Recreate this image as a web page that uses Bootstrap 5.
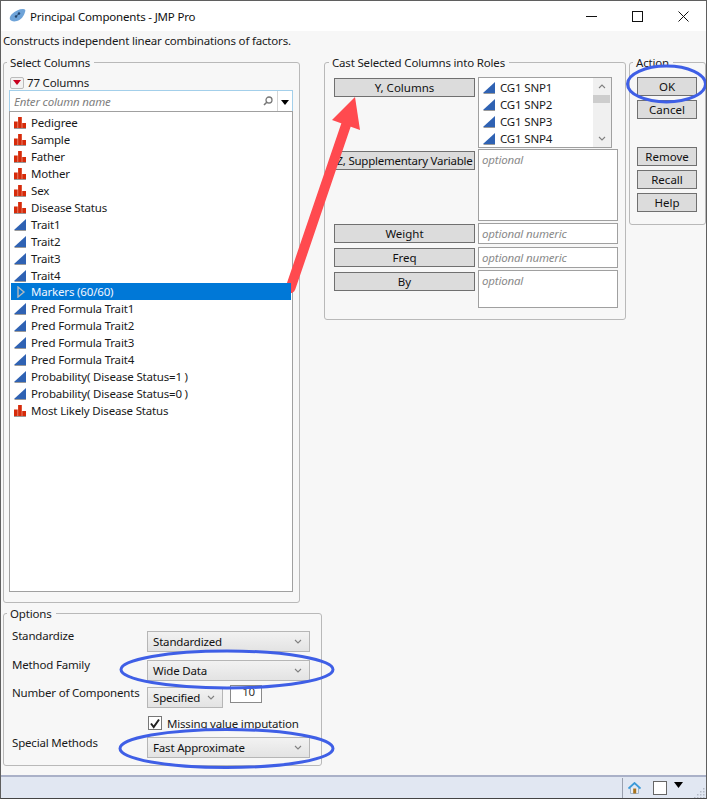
<!DOCTYPE html>
<html lang="en">
<head>
<meta charset="utf-8">
<title>Principal Components - JMP Pro</title>
<link rel="stylesheet" href="https://cdn.jsdelivr.net/npm/bootstrap@5.3.0/dist/css/bootstrap.min.css">
<style>
html,body{margin:0;padding:0;background:#fff}
body{font-family:"Noto Sans","Open Sans",sans-serif;font-size:11.5px;line-height:17px;color:#1a1a1a;letter-spacing:-.18px}
.win{position:relative;width:707px;height:799px;border:1px solid #5f5f5f;border-bottom-color:#444;background:#f7f7f7;overflow:hidden;display:flex;flex-direction:column}
.titlebar{height:30px;flex:none;background:#fff;color:#111;padding-left:8px;gap:4px}
.wctl{margin-left:auto;gap:0}
.wctl span{display:flex;width:46px;height:30px;align-items:center;justify-content:center}
.desc{height:17px;margin:1px 0 5px 2px;flex:none;white-space:nowrap}
.cols{flex:1;min-height:0;position:relative}
fieldset.grp{border:1px solid #b9b9b9;border-radius:3px;min-width:0;margin:0;position:relative}
fieldset.grp>legend{float:none;width:auto;font-size:inherit;line-height:17px;padding:0 4px 0 3px;margin:0}
.leftcol{width:319px;margin-left:2px;flex:none}
fieldset.selgrp{width:297px;height:549px;padding:0 6px 0 5px}
fieldset.selgrp>legend{margin-left:-2px}
.cnt{height:17px;margin-top:3px;gap:3px;padding-left:1px;margin-bottom:-1px}
.redbtn{width:14px;height:12px;border:1px solid #bbb;border-radius:2px;background:#f2f2f2;display:flex;align-items:center;justify-content:center}
.redbtn i{display:block;border:4px solid transparent;border-top:5px solid #c8001e;border-bottom:0}
.searchbox{height:22px;border:1px solid #a3cfea;background:#fff;color:#808080;font-style:italic;padding:0 0 0 4px;margin-bottom:0}
.searchbox .drop{margin-left:auto;gap:0}
.searchbox .drop svg{margin-right:4px}
.searchbox .dd{width:15px;height:20px;border-left:1px solid #d5d5d5;display:flex;align-items:center;justify-content:center}
.searchbox .dd i{display:block;border:4px solid transparent;border-top:5px solid #000;border-bottom:0;margin-top:2px}
.collist{height:481px;border:1px solid #a0a0a0;background:#fff;border-radius:0;padding:2px 1px 0;display:block;margin-top:-1px}
.collist .list-group-item{border:0;border-radius:0;background:transparent;color:#1a1a1a;padding:0 0 0 3px;height:17px;line-height:17px;display:flex;align-items:center;gap:5px;white-space:nowrap}
.collist .list-group-item.active{background:#0078d7;color:#f0f6ff}
.ico{width:12px;height:12px;flex:none}
fieldset.optgrp{width:319px;height:161px;margin-top:2px;padding:0 8px}
fieldset.optgrp>legend{margin-left:-5px}
.optgrid{display:grid;grid-template-columns:135px 163px;row-gap:0;margin-top:6px}
.optgrid>.l{white-space:nowrap;line-height:15px}
.fake-select{height:21px;border:1px solid #b6b6b6;background:linear-gradient(#f2f2f2,#e3e3e3);padding:0 0 0 5px;display:flex;align-items:center;white-space:nowrap;color:#111;border-radius:0}
.fake-select svg{margin-left:auto;margin-right:7px;flex:none}
.num{width:32px;height:18px;border:1px solid #8a8a8a;background:#fff;text-align:right;padding-right:6px;line-height:12px;overflow:hidden;margin-top:-2px;color:#333}
.chk{width:14px;height:14px;border:1px solid #777;background:#fff;display:flex;align-items:center;justify-content:center;margin-left:1px;margin-right:5px}
fieldset.castgrp{width:302px;height:266px;margin-left:2px;padding:0 0 0 9px}
fieldset.castgrp>legend{margin-left:-5px}
.rolerow{display:flex;gap:3px}
.rolebtn,.actbtn{background:#dcdcdc;border:1px solid #707070;border-radius:0;color:#111;font-size:inherit;line-height:17px;padding:0;height:19px;white-space:nowrap;overflow:hidden;--bs-btn-hover-bg:#dcdcdc;--bs-btn-hover-color:#111;--bs-btn-hover-border-color:#707070}
.rolebtn{width:141px;flex:none;display:flex;justify-content:center}
.actbtn{width:60px;display:block}
.rolebox{border:1px solid #a0a0a0;background:#fff;color:#8a8a8a;font-style:italic;padding:0 3px;width:140px;flex:none;line-height:19px;white-space:nowrap}
.ylist{width:134px;height:71px;padding:1px 0 0 4px;color:#1a1a1a;font-style:normal;line-height:17px;position:relative;overflow:hidden;margin-top:-1px}
.ylist>div{display:flex;align-items:center;gap:5px;height:17px}
.sb{position:absolute;right:0;top:0;bottom:0;width:18px;background:#f0f0f0}
.sb b{position:absolute;left:0;right:1px;top:17px;height:8px;background:#cdcdcd}
.sb svg{position:absolute;left:5px}
fieldset.actgrp{width:77px;height:171px;margin-left:3px;padding:0 7px}
fieldset.actgrp>legend{margin-left:-4px}
.status{height:23px;flex:none;background:#e1e7f2;border-top:2px solid #aab1c8;position:relative;justify-content:flex-end}
.stbox{width:14px;height:14px;border:1px solid #666;background:#fff}
.overlay{position:absolute;left:-1px;top:-1px;width:708px;height:799px;pointer-events:none}
.opt-t1{margin-top:3px}
.opt-m{margin-top:5px}
.opt-t{margin-top:8px}
.opt-m3{margin-top:4px}
.opt-t3{margin-top:6px;gap:7px}
.opt-sp{width:76px}
.opt-c{margin-top:8px;height:14px}
.opt-s{margin-top:5px}
.opt-u{margin-top:7px}
.rr1{margin-top:7px;align-items:flex-start}
.rr2{margin-top:1px}
.rr2 .rolebtn{margin-top:2px;letter-spacing:-.24px}
.rb2{height:72px}
.rr3{margin-top:2px}
.rr3b{margin-top:3px}
.rr3 .rolebtn{margin-top:1px}
.rb3{height:21px}
.rb4{height:38px}
.rr4 .rolebtn{margin-top:2px}
.rr4{margin-top:2px}
.act1{margin-top:6px;gap:4px}
.act2{margin-top:28px;gap:4px}
.stdiv{margin-right:5px}
.sthome{margin-right:12px}
.sttri{margin-left:7px;margin-right:11px;margin-top:-6px}
.stgrip{margin-right:1px;margin-top:9px}
</style>
</head>
<body>
<svg width="0" height="0" style="position:absolute">
<symbol id="nom" viewBox="0 0 12 12"><rect x="0" y="4.500" width="3.700" height="6.500" fill="#d62b0a"/><rect x="4.100" y="0" width="3.700" height="11" fill="#d62b0a"/><rect x="8.200" y="6" width="3.800" height="5" fill="#d62b0a"/><rect x="0" y="11" width="12" height="1" fill="#999"/></symbol>
<symbol id="con" viewBox="0 0 12 12"><polygon points="0,11 12,0 12,11" fill="#2f62b3"/><polygon points="0,12 12,12 12,11 1,11" fill="#9a9a9a"/></symbol>
<symbol id="chev" viewBox="0 0 8 5"><path d="M1 1 4 4 7 1" fill="none" stroke="#808080" stroke-width="1.100"/></symbol>
</svg>
<div class="win">
  <div class="titlebar d-flex align-items-center">
    <svg width="17" height="14" viewBox="0 0 17 14"><path d="M3 12C0 11 0 8 3 5 6 2 10 0 14 0c2 0 3 1 2 3-1 4-4 8-8 9-2 .5-4 .5-5 0z" fill="#6ea3d8"/><circle cx="7" cy="7.500" r="1.200" fill="#24466e"/><circle cx="10" cy="4.500" r="1.200" fill="#24466e"/><path d="M7 7.500 10 4.500" stroke="#24466e"/></svg>
    <span>Principal Components - JMP Pro</span>
    <div class="wctl d-flex">
      <span><svg width="11" height="11" viewBox="0 0 11 11"><path d="M0 5.500H11" stroke="#111"/></svg></span>
      <span><svg width="11" height="11" viewBox="0 0 11 11"><rect x=".5" y=".5" width="10" height="10" fill="none" stroke="#111"/></svg></span>
      <span><svg width="11" height="11" viewBox="0 0 11 11"><path d="M.5.5 10.500 10.500M10.500.5.5 10.500" stroke="#111"/></svg></span>
    </div>
  </div>
  <div class="desc">Constructs independent linear combinations of factors.</div>
  <div class="cols d-flex">
    <div class="leftcol">
      <fieldset class="grp selgrp">
        <legend>Select Columns</legend>
        <div class="cnt d-flex align-items-center"><span class="redbtn"><i></i></span><span>77 Columns</span></div>
        <div class="searchbox d-flex align-items-center"><span>Enter column name</span>
          <span class="drop d-flex align-items-center"><svg width="10" height="10" viewBox="0 0 10 10"><circle cx="6" cy="4" r="3" fill="none" stroke="#777" stroke-width="1.300"/><path d="M4 6 1 9" stroke="#777" stroke-width="1.600"/></svg><span class="dd"><i></i></span></span>
        </div>
        <div class="list-group collist">
          <div class="list-group-item"><svg class="ico"><use href="#nom"/></svg>Pedigree</div>
          <div class="list-group-item"><svg class="ico"><use href="#nom"/></svg>Sample</div>
          <div class="list-group-item"><svg class="ico"><use href="#nom"/></svg>Father</div>
          <div class="list-group-item"><svg class="ico"><use href="#nom"/></svg>Mother</div>
          <div class="list-group-item"><svg class="ico"><use href="#nom"/></svg>Sex</div>
          <div class="list-group-item"><svg class="ico"><use href="#nom"/></svg>Disease Status</div>
          <div class="list-group-item"><svg class="ico"><use href="#con"/></svg>Trait1</div>
          <div class="list-group-item"><svg class="ico"><use href="#con"/></svg>Trait2</div>
          <div class="list-group-item"><svg class="ico"><use href="#con"/></svg>Trait3</div>
          <div class="list-group-item"><svg class="ico"><use href="#con"/></svg>Trait4</div>
          <div class="list-group-item active"><svg class="ico" viewBox="0 0 12 12"><path d="M4 1 10 6 4 11Z" fill="none" stroke="#b0b8c0" stroke-width="1.400"/></svg>Markers (60/60)</div>
          <div class="list-group-item"><svg class="ico"><use href="#con"/></svg>Pred Formula Trait1</div>
          <div class="list-group-item"><svg class="ico"><use href="#con"/></svg>Pred Formula Trait2</div>
          <div class="list-group-item"><svg class="ico"><use href="#con"/></svg>Pred Formula Trait3</div>
          <div class="list-group-item"><svg class="ico"><use href="#con"/></svg>Pred Formula Trait4</div>
          <div class="list-group-item"><svg class="ico"><use href="#con"/></svg>Probability( Disease Status=1 )</div>
          <div class="list-group-item"><svg class="ico"><use href="#con"/></svg>Probability( Disease Status=0 )</div>
          <div class="list-group-item"><svg class="ico"><use href="#nom"/></svg>Most Likely Disease Status</div>
        </div>
      </fieldset>
      <fieldset class="grp optgrp">
        <legend>Options</legend>
        <div class="optgrid">
          <div class="l">Standardize</div>
          <div class="fake-select opt-t1">Standardized<svg width="8" height="5"><use href="#chev"/></svg></div>
          <div class="l opt-m">Method Family</div>
          <div class="fake-select opt-t">Wide Data<svg width="8" height="5"><use href="#chev"/></svg></div>
          <div class="l opt-m3">Number of Components</div>
          <div class="d-flex opt-t3"><div class="fake-select opt-sp">Specified<svg width="8" height="5"><use href="#chev"/></svg></div><div class="num">10</div></div>
          <div></div>
          <div class="d-flex align-items-center opt-c"><span class="chk"><svg width="12" height="11" viewBox="0 0 12 11"><path d="M2 5.500 4.700 9 10 1.500" fill="none" stroke="#222" stroke-width="2"/></svg></span><span>Missing value imputation</span></div>
          <div class="l opt-s">Special Methods</div>
          <div class="fake-select opt-u">Fast Approximate<svg width="8" height="5"><use href="#chev"/></svg></div>
        </div>
      </fieldset>
    </div>
    <fieldset class="grp castgrp">
      <legend>Cast Selected Columns into Roles</legend>
      <div class="rolerow rr1">
        <button type="button" class="btn rolebtn">Y, Columns</button>
        <div class="rolebox ylist">
          <div><svg class="ico"><use href="#con"/></svg>CG1 SNP1</div>
          <div><svg class="ico"><use href="#con"/></svg>CG1 SNP2</div>
          <div><svg class="ico"><use href="#con"/></svg>CG1 SNP3</div>
          <div><svg class="ico"><use href="#con"/></svg>CG1 SNP4</div>
          <span class="sb"><svg width="8" height="5" style="top:6px;transform:scaleY(-1)"><use href="#chev"/></svg><b></b><svg width="8" height="5" style="bottom:6px"><use href="#chev"/></svg></span>
        </div>
      </div>
      <div class="rolerow rr2">
        <button type="button" class="btn rolebtn">Z, Supplementary Variable</button>
        <div class="rolebox rb2">optional</div>
      </div>
      <div class="rolerow rr3">
        <button type="button" class="btn rolebtn">Weight</button>
        <div class="rolebox rb3">optional numeric</div>
      </div>
      <div class="rolerow rr3 rr3b">
        <button type="button" class="btn rolebtn">Freq</button>
        <div class="rolebox rb3">optional numeric</div>
      </div>
      <div class="rolerow rr4">
        <button type="button" class="btn rolebtn">By</button>
        <div class="rolebox rb4">optional</div>
      </div>
    </fieldset>
    <fieldset class="grp actgrp">
      <legend>Action</legend>
      <div class="d-flex flex-column act1"><button type="button" class="btn actbtn">OK</button><button type="button" class="btn actbtn">Cancel</button></div>
      <div class="d-flex flex-column act2"><button type="button" class="btn actbtn">Remove</button><button type="button" class="btn actbtn">Recall</button><button type="button" class="btn actbtn">Help</button></div>
    </fieldset>
  </div>
  <div class="status d-flex align-items-center">
    <svg class="stdiv" width="1" height="20"><rect width="1" height="20" fill="#9aa0ae"/></svg>
    <svg class="sthome" width="13" height="12" viewBox="0 0 13 12"><path d="M2.500 6V11.500H10.500V6" fill="#e9eef5" stroke="#9fb5cc"/><path d="M.5 6.500 6.500 1 12.500 6.500" fill="none" stroke="#3b9ad8" stroke-width="1.800"/><rect x="5.200" y="6.500" width="3" height="5" fill="#a8741e"/></svg>
    <span class="stbox"></span>
    <svg class="sttri" width="9" height="6"><path d="M0 0H9L4.500 6Z" fill="#000"/></svg>
    <svg class="stgrip" width="11" height="11" viewBox="0 0 11 11" fill="#b4bac6"><rect x="9" y="1" width="1.500" height="1.500"/><rect x="9" y="4" width="1.500" height="1.500"/><rect x="6" y="4" width="1.500" height="1.500"/><rect x="9" y="7" width="1.500" height="1.500"/><rect x="6" y="7" width="1.500" height="1.500"/><rect x="3" y="7" width="1.500" height="1.500"/><rect x="9" y="10" width="1.500" height="1"/><rect x="6" y="10" width="1.500" height="1"/><rect x="3" y="10" width="1.500" height="1"/><rect x="0" y="10" width="1.500" height="1"/></svg>
  </div>
  <svg class="overlay" viewBox="0 0 708 799">
    <ellipse cx="666.500" cy="84" rx="39" ry="18" fill="none" stroke="#3f5fe6" stroke-width="3"/>
    <ellipse cx="227" cy="669.500" rx="106" ry="18.500" fill="none" stroke="#3f5fe6" stroke-width="3"/>
    <ellipse cx="226.500" cy="748.500" rx="106.500" ry="19" fill="none" stroke="#3f5fe6" stroke-width="3"/>
    <path d="M290.500 288 346 125" stroke="#ff4a4f" stroke-width="10" stroke-linecap="round"/>
    <path d="M355 97 332 120 360 130Z" fill="#ff4a4f"/>
  </svg>
</div>
</body>
</html>
